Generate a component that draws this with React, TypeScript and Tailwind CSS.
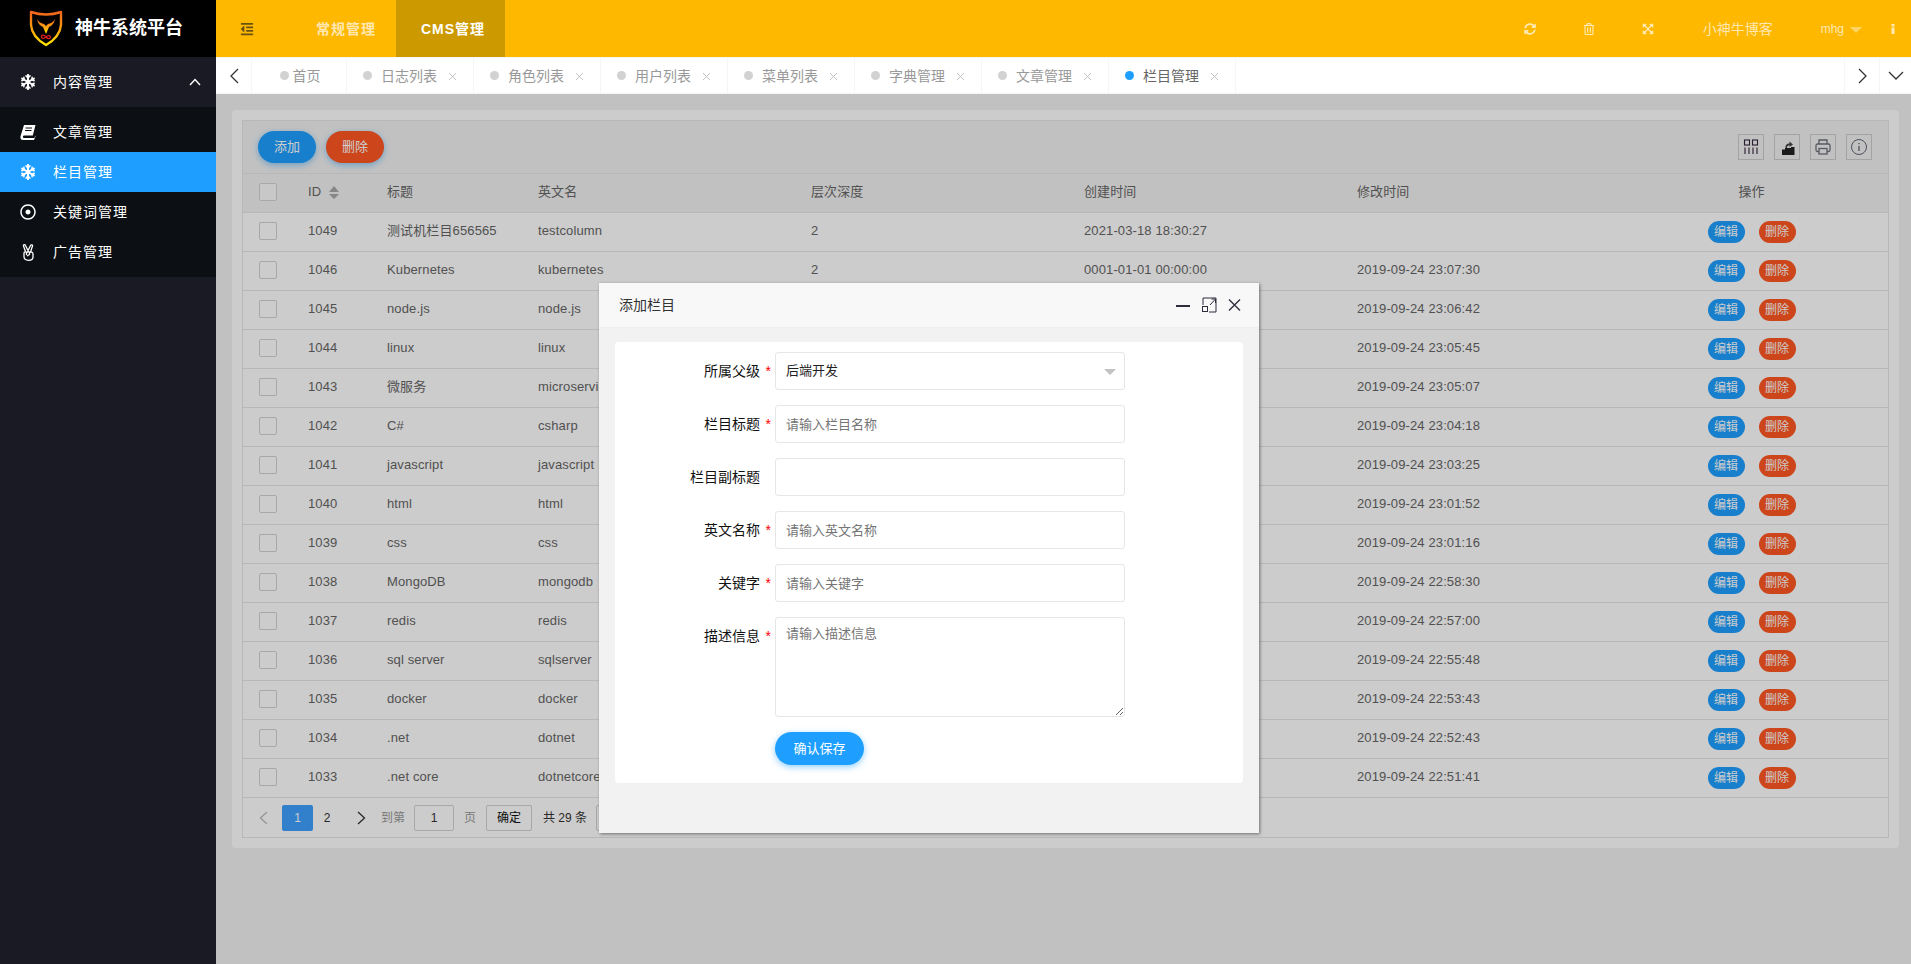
import {
  FaExpandArrowsAlt,
  FaOutdent,
  FaRegDotCircle,
  FaRegTrashAlt,
  FaSnowflake,
  FaSyncAlt,
} from "react-icons/fa";

const tabs = ["日志列表", "角色列表", "用户列表", "菜单列表", "字典管理", "文章管理", "栏目管理"];

const rows = [
  ["1049", "测试机栏目656565", "testcolumn", "2021-03-18 18:30:27", ""],
  ["1046", "Kubernetes", "kubernetes", "0001-01-01 00:00:00", "2019-09-24 23:07:30"],
  ["1045", "node.js", "node.js", "0001-01-01 00:00:00", "2019-09-24 23:06:42"],
  ["1044", "linux", "linux", "0001-01-01 00:00:00", "2019-09-24 23:05:45"],
  ["1043", "微服务", "microservice", "0001-01-01 00:00:00", "2019-09-24 23:05:07"],
  ["1042", "C#", "csharp", "0001-01-01 00:00:00", "2019-09-24 23:04:18"],
  ["1041", "javascript", "javascript", "0001-01-01 00:00:00", "2019-09-24 23:03:25"],
  ["1040", "html", "html", "0001-01-01 00:00:00", "2019-09-24 23:01:52"],
  ["1039", "css", "css", "0001-01-01 00:00:00", "2019-09-24 23:01:16"],
  ["1038", "MongoDB", "mongodb", "0001-01-01 00:00:00", "2019-09-24 22:58:30"],
  ["1037", "redis", "redis", "0001-01-01 00:00:00", "2019-09-24 22:57:00"],
  ["1036", "sql server", "sqlserver", "0001-01-01 00:00:00", "2019-09-24 22:55:48"],
  ["1035", "docker", "docker", "0001-01-01 00:00:00", "2019-09-24 22:53:43"],
  ["1034", ".net", "dotnet", "0001-01-01 00:00:00", "2019-09-24 22:52:43"],
  ["1033", ".net core", "dotnetcore", "0001-01-01 00:00:00", "2019-09-24 22:51:41"],
];

const gridCols = "grid grid-cols-[50px_79px_151px_273px_273px_273px_273px_1fr] items-center pb-[2px]";

function Logo() {
  return (
    <svg width="34" height="37" viewBox="0 0 34 37" fill="none">
      <defs>
        <linearGradient id="logoGrad" x1="0" y1="0" x2="0" y2="1">
          <stop offset="0" stopColor="#f0641e" />
          <stop offset="0.55" stopColor="#f9a50f" />
          <stop offset="1" stopColor="#ffe600" />
        </linearGradient>
      </defs>
      <path
        d="M2 2 Q17 7 32 2 L32 15 Q31 27 17 35 Q3 27 2 15 Z"
        stroke="url(#logoGrad)"
        strokeWidth="2.4"
        strokeLinejoin="round"
      />
      <path
        d="M8 9 Q9 15 14 17 L17 24 L20 17 Q25 15 26 9 Q24 13 19 14 L17 16 L15 14 Q10 13 8 9 Z"
        fill="url(#logoGrad)"
      />
      <path
        d="M17 27 C15 24 12 25 12.5 27 C13 29 15.5 28.5 17 27 C18.5 25.5 21 25 21.5 27 C21.5 29 19 29.5 17 27 Z"
        stroke="#d81e1e"
        strokeWidth="1.3"
      />
    </svg>
  );
}

function BookIcon() {
  return (
    <svg width="16" height="15" viewBox="0 0 16 15" fill="#ffffff">
      <path d="M4 0 H15.5 L12.8 10.5 H3.8 C2.6 10.500 2.600 13 3.800 13 H14.500 L15.300 10.500 L15.500 11.500 L14 15 H3 C0.600 15 0 13 0.600 11 Z" />
      <path d="M5.500 3 H12 M5 5.500 H11.500" stroke="#0c0f13" strokeWidth="1" />
    </svg>
  );
}

function PeaceIcon() {
  return (
    <svg width="13" height="17" viewBox="0 0 13 17" fill="none" stroke="#ffffff" strokeWidth="1.300">
      <path d="M3.500 7.500 L1.500 2 C1 0.500 3 0.300 3.500 1.500 L6 6.500 L8.500 1.500 C9 0.300 11 0.800 10.500 2 L8.500 8" />
      <path d="M2 9 C2 7.500 4 7.500 4.500 8.500 C5.500 7.500 7 7.500 7.500 8.500 C9 7.500 11 8 11 10 V13 C11 15.500 9 16.300 6.500 16.300 C3.500 16.300 2 15 2 12.500 Z" />
      <path d="M4.500 8.500 V11 M7.500 8.500 V10.500 L5 12" />
    </svg>
  );
}

function Tab({ label, active }: { label: string; active?: boolean }) {
  return (
    <div className="w-[127px] h-full shrink-0 flex items-center pl-4 border-r border-[#f6f6f6]">
      <span className={`w-[9px] h-[9px] rounded-full ${active ? "bg-[#1e9fff]" : "bg-[#d2d2d2]"}`} />
      <span className={`ml-[9px] text-sm ${active ? "text-[#666666]" : "text-[#999999]"}`}>{label}</span>
      <svg className="ml-[11px] mt-[2px]" width="9" height="9" viewBox="0 0 9 9" stroke="#c2c2c2" strokeWidth="1">
        <path d="M1 1 L8 8 M8 1 L1 8" />
      </svg>
    </div>
  );
}

function SideItem({ icon, label, active }: { icon: React.ReactNode; label: string; active?: boolean }) {
  return (
    <div className={`h-10 flex items-center pl-5 text-sm tracking-[1px] text-white ${active ? "bg-[#1e9fff]" : ""}`}>
      <span className="w-4 mr-[17px] flex justify-center text-[16px]">{icon}</span>
      {label}
    </div>
  );
}

function ToolIcon({ children }: { children: React.ReactNode }) {
  return (
    <div className="w-[26px] h-[26px] border border-[#cccccc] flex items-center justify-center">{children}</div>
  );
}

function FormRow({ label, required, children }: { label: string; required?: boolean; children: React.ReactNode }) {
  return (
    <div className="flex mb-[15px]">
      <div className="w-[145px] h-[38px] flex items-center justify-end text-sm text-[#111111] relative">
        {label}
        {required && <span className="absolute right-[-11px] top-[9px] text-sm text-[#ff0000]">*</span>}
      </div>
      <div className="ml-[15px] w-[350px]">{children}</div>
    </div>
  );
}

function TextInput({ placeholder }: { placeholder?: string }) {
  return (
    <input
      readOnly
      placeholder={placeholder}
      className="block w-full h-[38px] border border-[#e6e6e6] rounded-[3px] pl-[10px] text-[13px] bg-white placeholder:text-[#757575] outline-none"
    />
  );
}

export default function App() {
  return (
    <div className="w-[1911px] h-[964px] overflow-hidden flex font-['Liberation_Sans','Noto_Sans_CJK_SC',sans-serif] bg-[#f2f2f2]">
      <aside className="w-[216px] shrink-0 bg-[#191a23] flex flex-col">
        <div className="h-[57px] bg-black flex items-center pl-[29px]">
          <Logo />
          <span className="ml-3 text-[18px] font-bold text-white">神牛系统平台</span>
        </div>
        <div className="h-[50px] flex items-center pl-5 pr-[15px] text-sm tracking-[1px] text-white">
          <FaSnowflake className="w-4 h-4 mr-[17px]" />
          内容管理
          <svg className="ml-auto" width="12" height="8" viewBox="0 0 12 8" fill="none" stroke="#ffffff" strokeWidth="1.4">
            <path d="M1 7 L6 1.5 L11 7" />
          </svg>
        </div>
        <div className="bg-[#0c0f13] py-[5px]">
          <SideItem icon={<BookIcon />} label="文章管理" />
          <SideItem icon={<FaSnowflake />} label="栏目管理" active />
          <SideItem icon={<FaRegDotCircle />} label="关键词管理" />
          <SideItem icon={<PeaceIcon />} label="广告管理" />
        </div>
      </aside>

      <div className="flex-1 flex flex-col min-w-0">
        <header className="h-[57px] shrink-0 bg-[#ffb800] flex items-center text-white/70">
          <div className="w-[62px] mr-2 flex justify-center">
            <FaOutdent className="w-[14px] h-[14px] text-[#6b5210]" />
          </div>
          <div className="w-[110px] h-full pl-[10px] flex items-center justify-center text-sm font-bold tracking-[1px]">常规管理</div>
          <div className="w-[109px] h-full pl-[5px] flex items-center justify-center text-sm font-bold tracking-[1px] text-white bg-[#cc9900]">
            CMS管理
          </div>
          <div className="ml-auto w-[59px] flex justify-center"><FaSyncAlt className="w-3 h-3" /></div>
          <div className="w-[59px] flex justify-center"><FaRegTrashAlt className="w-3 h-3" /></div>
          <div className="w-[58px] flex justify-center"><FaExpandArrowsAlt className="w-3 h-3" /></div>
          <span className="ml-[26px] text-sm">小神牛博客</span>
          <span className="ml-12 text-xs">mhg</span>
          <span className="ml-[6px] mt-[3px] w-0 h-0 border-x-[6px] border-x-transparent border-t-[6px] border-t-white/40" />
          <svg className="ml-[29px] mr-4" width="4" height="10" viewBox="0 0 4 10" fill="currentColor">
            <rect x="0.5" y="0" width="3" height="2.5" />
            <rect x="0.5" y="3.5" width="3" height="6.5" />
          </svg>
        </header>

        <div className="h-[37px] shrink-0 bg-white border-y border-[#f6f6f6] flex items-center">
          <div className="w-9 h-full pl-[2px] flex items-center justify-center border-r border-[#f6f6f6]">
            <svg width="9" height="16" viewBox="0 0 9 16" fill="none" stroke="#333333" strokeWidth="1.3">
              <path d="M8 1 L1 8 L8 15" />
            </svg>
          </div>
          <div className="w-[95px] h-full pl-[2px] flex items-center justify-center border-r border-[#f6f6f6]">
            <span className="w-[9px] h-[9px] rounded-full bg-[#d2d2d2]" />
            <span className="ml-1 text-sm text-[#999999]">首页</span>
          </div>
          {tabs.map((t, i) => (
            <Tab key={t} label={t} active={i === tabs.length - 1} />
          ))}
          <div className="ml-auto w-[35px] h-full flex items-center justify-center border-l border-[#f6f6f6]">
            <svg width="9" height="16" viewBox="0 0 9 16" fill="none" stroke="#333333" strokeWidth="1.3">
              <path d="M1 1 L8 8 L1 15" />
            </svg>
          </div>
          <div className="w-[32px] h-full flex items-center justify-center border-l border-[#f6f6f6]">
            <svg width="16" height="9" viewBox="0 0 16 9" fill="none" stroke="#333333" strokeWidth="1.3">
              <path d="M1 1 L8 8 L15 1" />
            </svg>
          </div>
        </div>

        <main className="relative flex-1 pl-4 pr-3 pt-4">
          <div className="bg-white rounded p-[10px]">
            <div className="border border-[#e6e6e6]">
              <div className="h-[53px] border-b border-[#e6e6e6] bg-[#f2f2f2] flex items-center pl-[15px] pr-4">
                <button className="w-[58px] h-8 rounded-full bg-[#1e9fff] text-white text-[13px] shadow-[0_2px_6px_rgba(30,159,255,.5)]">
                  添加
                </button>
                <button className="ml-[10px] w-[58px] h-8 rounded-full bg-[#ff5722] text-white text-[13px] shadow-[0_2px_6px_rgba(30,159,255,.5)]">
                  删除
                </button>
                <div className="ml-auto flex gap-[10px]">
                  <ToolIcon>
                    <svg width="16" height="16" viewBox="0 0 16 16" fill="none" stroke="#33243a" strokeWidth="1.1">
                      <rect x="1.5" y="1" width="5" height="5" />
                      <rect x="9.5" y="1" width="5" height="5" />
                      <path d="M2 8.5 V15 M6 8.5 V15 M10 8.5 V15 M14 8.5 V15" />
                    </svg>
                  </ToolIcon>
                  <ToolIcon>
                    <svg className="mt-[2px] ml-[2px]" width="13" height="14" viewBox="0 0 13 14" fill="#222222">
                      <path d="M0 8.5 H3 V7 H9 V6 H12.5 V14 H0 Z" />
                      <path d="M3.500 7 C3.500 3.500 5 2.500 7.500 2.500 V0.500 L11 3.500 L7.500 6 V4.200 C6 4.200 5 5 5 7 Z" fill="#444444" />
                    </svg>
                  </ToolIcon>
                  <ToolIcon>
                    <svg width="18" height="18" viewBox="0 0 18 18" fill="none" stroke="#6b7078" strokeWidth="1.3">
                      <path d="M5 6 V2 H13 V6" />
                      <rect x="2" y="6" width="14" height="7.5" rx="1.5" />
                      <rect x="5" y="10.5" width="8" height="5.5" fill="#f2f2f2" />
                    </svg>
                  </ToolIcon>
                  <ToolIcon>
                    <svg width="18" height="18" viewBox="0 0 18 18" fill="none" stroke="#5f6670" strokeWidth="1">
                      <circle cx="9" cy="9" r="7.5" />
                      <path d="M9 8 V13 M9 5 V6.3" strokeWidth="1.3" />
                    </svg>
                  </ToolIcon>
                </div>
              </div>

              <div className={`${gridCols} h-[39px] border-b border-[#e6e6e6] bg-[#f2f2f2] text-[13px] tracking-[0.12px] text-[#666666]`}>
                <div className="pl-4">
                  <div className="w-[18px] h-[18px] border border-[#d2d2d2] rounded-[2px] bg-white/60" />
                </div>
                <div className="pl-[15px] flex items-center">
                  ID
                  <svg className="ml-2" width="10" height="13" viewBox="0 0 10 13" fill="#a8a8a8">
                    <path d="M5 0 L10 6 H0 Z M0 8 H10 L5 13 Z" />
                  </svg>
                </div>
                <div className="pl-[15px]">标题</div>
                <div className="pl-[15px]">英文名</div>
                <div className="pl-[15px]">层次深度</div>
                <div className="pl-[15px]">创建时间</div>
                <div className="pl-[15px]">修改时间</div>
                <div className="text-center">操作</div>
              </div>

              {rows.map((r) => (
                <div key={r[0]} className={`${gridCols} h-[39px] border-b border-[#e6e6e6] text-[13px] tracking-[0.12px] text-[#666666]`}>
                  <div className="pl-4">
                    <div className="w-[18px] h-[18px] border border-[#d2d2d2] rounded-[2px]" />
                  </div>
                  <div className="pl-[15px]">{r[0]}</div>
                  <div className="pl-[15px]">{r[1]}</div>
                  <div className="pl-[15px]">{r[2]}</div>
                  <div className="pl-[15px]">2</div>
                  <div className="pl-[15px]">{r[3]}</div>
                  <div className="pl-[15px]">{r[4]}</div>
                  <div className="flex justify-center gap-[14px] mt-[2px]">
                    <button className="w-[37px] h-[22px] rounded-full bg-[#1e9fff] text-white text-xs">编辑</button>
                    <button className="w-[37px] h-[22px] rounded-full bg-[#ff5722] text-white text-xs">删除</button>
                  </div>
                </div>
              ))}

              <div className="h-[39px] flex items-center pl-4 text-xs text-[#333333]">
                <div className="w-[23px]">
                  <svg width="9" height="14" viewBox="0 0 9 14" fill="none" stroke="#bbbbbb" strokeWidth="1.3">
                    <path d="M8 1 L1.5 7 L8 13" />
                  </svg>
                </div>
                <div className="w-[31px] h-[26px] rounded-[2px] bg-[#3fa0ff] text-white flex items-center justify-center">1</div>
                <div className="w-[28px] text-center">2</div>
                <div className="w-10 flex justify-center">
                  <svg width="9" height="14" viewBox="0 0 9 14" fill="none" stroke="#333333" strokeWidth="1.3">
                    <path d="M1 1 L7.5 7 L1 13" />
                  </svg>
                </div>
                <div className="w-[33px] text-[#999999]">到第</div>
                <div className="w-10 h-[26px] border border-[#d2d2d2] rounded-[2px] flex items-center justify-center">1</div>
                <div className="mx-[10px] text-[#999999]">页</div>
                <div className="w-[46px] h-[26px] border border-[#d2d2d2] rounded-[2px] flex items-center justify-center text-[#111111]">确定</div>
                <div className="ml-[11px]">共 29 条</div>
                <div className="ml-[9px] w-[100px] h-[26px] border border-[#d2d2d2] rounded-[2px]" />
              </div>
            </div>
          </div>

          <div className="absolute inset-0 bg-black/20" />

          <div className="absolute left-[383px] top-[189px] w-[660px] h-[550px] bg-[#f2f2f2] shadow-[1px_1px_3px_rgba(0,0,0,.45)]">
            <div className="h-[45px] bg-[#f8f8f8] border-b border-[#eeeeee] flex items-center pl-5 text-sm text-[#333333]">
              添加栏目
              <svg className="ml-auto mr-[18px]" width="66" height="16" viewBox="0 0 66 16" fill="none" stroke="#2e2d3c">
                <path d="M1 9 H15" strokeWidth="2" />
                <path d="M33 1 H41 V15 H34 M28 8 V1 H33 M35 8 L40 2.5 M36.5 2 H40.5 V6" strokeWidth="1" />
                <rect x="27.5" y="9.5" width="5" height="5" strokeWidth="1" />
                <path d="M54 2.5 L65 13.5 M65 2.5 L54 13.5" strokeWidth="1.4" />
              </svg>
            </div>
            <div className="mx-4 mt-[14px] h-[441px] bg-white rounded pt-[10px]">
              <FormRow label="所属父级" required>
                <div className="relative h-[38px] border border-[#e6e6e6] rounded-[3px] pl-[10px] flex items-center text-[13px] text-[#222222]">
                  后端开发
                  <span className="absolute right-[8px] top-[16px] w-0 h-0 border-x-[6px] border-x-transparent border-t-[6px] border-t-[#c2c2c2]" />
                </div>
              </FormRow>
              <FormRow label="栏目标题" required>
                <TextInput placeholder="请输入栏目名称" />
              </FormRow>
              <FormRow label="栏目副标题">
                <TextInput />
              </FormRow>
              <FormRow label="英文名称" required>
                <TextInput placeholder="请输入英文名称" />
              </FormRow>
              <FormRow label="关键字" required>
                <TextInput placeholder="请输入关键字" />
              </FormRow>
              <FormRow label="描述信息" required>
                <textarea
                  readOnly
                  placeholder="请输入描述信息"
                  className="block w-full h-[100px] border border-[#e6e6e6] rounded-[3px] px-[10px] py-[6px] text-[13px] placeholder:text-[#757575] outline-none"
                />
              </FormRow>
              <button className="ml-[160px] block w-[89px] h-[33px] rounded-full bg-[#1e9fff] text-white text-[13px] shadow-[0_2px_6px_rgba(30,159,255,.5)]">
                确认保存
              </button>
            </div>
          </div>
        </main>
      </div>
    </div>
  );
}
